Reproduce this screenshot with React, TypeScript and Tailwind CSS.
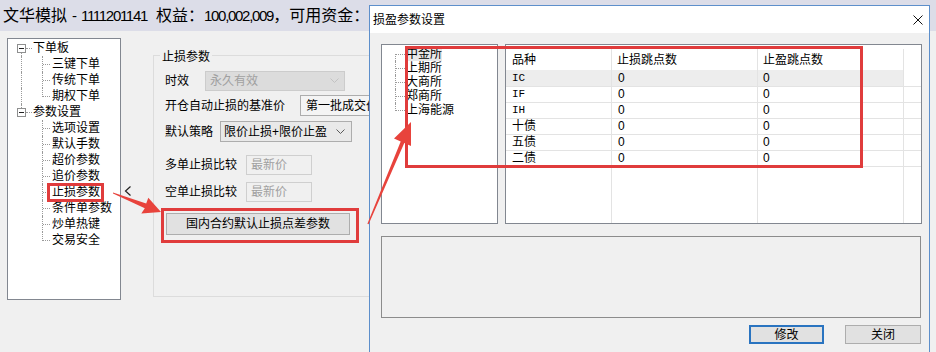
import React from "react";

const tree = [
  { label: "下单板", children: ["三键下单", "传统下单", "期权下单"] },
  {
    label: "参数设置",
    children: ["选项设置", "默认手数", "超价参数", "追价参数", "止损参数", "条件单参数", "炒单热键", "交易安全"],
  },
];

const exchanges = ["中金所", "上期所", "大商所", "郑商所", "上海能源"];

const rows = [
  { name: "IC", mono: true },
  { name: "IF", mono: true },
  { name: "IH", mono: true },
  { name: "十债", mono: false },
  { name: "五债", mono: false },
  { name: "二债", mono: false },
];

function Chevron({ disabled }: { disabled?: boolean }) {
  return (
    <svg width="9" height="5" viewBox="0 0 9 5" className="shrink-0">
      <polyline
        points="0.5,0.5 4.5,4.5 8.5,0.5"
        fill="none"
        stroke={disabled ? "#c2c2c2" : "#5a5a5a"}
        strokeWidth="1"
      />
    </svg>
  );
}

function Expander() {
  return (
    <span className="absolute left-[9px] top-[4px] flex h-[9px] w-[9px] items-center justify-center border border-[#8e8f8f] bg-white">
      <span className="h-px w-[5px] bg-[#222]" />
    </span>
  );
}

function Tree() {
  return (
    <div className="ml-[7px] mt-[7px] h-[262px] w-[114px] shrink-0 border border-[#828790] bg-white pt-[1px] text-[12px] leading-4 text-black">
      {tree.map((g, gi) => (
        <div key={g.label}>
          <div className="relative flex h-4 items-center">
            {gi > 0 && <span className="absolute left-[13px] top-0 h-[4px] border-l border-dotted border-[#9a9a9a]" />}
            {gi < tree.length - 1 && (
              <span className="absolute bottom-0 left-[13px] top-[13px] border-l border-dotted border-[#9a9a9a]" />
            )}
            <Expander />
            <span className="absolute left-[18px] top-[8px] w-[6px] border-t border-dotted border-[#9a9a9a]" />
            <span className="pl-[25px]">{g.label}</span>
          </div>
          {g.children.map((c, ci) => (
            <div key={c} className="relative flex h-4 items-center">
              {gi < tree.length - 1 && (
                <span className="absolute bottom-0 left-[13px] top-0 border-l border-dotted border-[#9a9a9a]" />
              )}
              <span
                className={`absolute left-[34px] top-0 border-l border-dotted border-[#9a9a9a] ${
                  ci === g.children.length - 1 ? "h-[9px]" : "bottom-0"
                }`}
              />
              <span className="absolute left-[35px] top-[8px] w-[7px] border-t border-dotted border-[#9a9a9a]" />
              <span className="pl-[44px]">{c}</span>
            </div>
          ))}
        </div>
      ))}
    </div>
  );
}

function StopLossGroup() {
  return (
    <div className="relative mt-[24px] h-[242px] w-[400px] shrink-0 border border-[#dcdcdc] text-[12px] leading-4 text-black">
      <span className="absolute -top-[7px] left-[6px] bg-[#f0f0f0] px-[2px]">止损参数</span>

      <div className="mt-[14px] flex h-[21px] items-center pl-[11px]">
        <span className="w-[40px]">时效</span>
        <div className="flex h-[20px] w-[140px] items-center justify-between border border-[#cccccc] bg-[#dcdcdc] pl-[4px] pr-[5px] text-[#a0a0a0]">
          <span>永久有效</span>
          <Chevron disabled />
        </div>
      </div>

      <div className="mt-[4px] flex h-[21px] items-center pl-[11px]">
        <span className="w-[135px]">开仓自动止损的基准价</span>
        <div className="flex h-[21px] w-[160px] items-center border border-[#adadad] bg-[#f4f4f4] pl-[5px]">
          <span>第一批成交价</span>
        </div>
      </div>

      <div className="mt-[5px] flex h-[21px] items-center pl-[11px]">
        <span className="w-[55px]">默认策略</span>
        <div className="flex h-[21px] w-[132px] items-center justify-between border border-[#adadad] bg-[#e9e9e9] pl-[3px] pr-[6px]">
          <span>限价止损+限价止盈</span>
          <Chevron />
        </div>
      </div>

      <div className="mt-[13px] flex h-[20px] items-center pl-[11px]">
        <span className="w-[81px]">多单止损比较</span>
        <div className="flex h-[20px] w-[66px] items-center border border-[#cfcfcf] bg-[#f0f0f0] pl-[4px] text-[#a0a0a0]">
          最新价
        </div>
      </div>

      <div className="mt-[7px] flex h-[20px] items-center pl-[11px]">
        <span className="w-[81px]">空单止损比较</span>
        <div className="flex h-[20px] w-[66px] items-center border border-[#cfcfcf] bg-[#f0f0f0] pl-[4px] text-[#a0a0a0]">
          最新价
        </div>
      </div>

      <div className="mt-[11px] pl-[12px]">
        <button
          type="button"
          className="flex h-[22px] w-[184px] items-center justify-center border border-[#adadad] bg-[#e1e1e1] text-[12px] text-black"
        >
          国内合约默认止损点差参数
        </button>
      </div>
    </div>
  );
}

function ExchangeList() {
  return (
    <div className="ml-[11px] h-[180px] w-[117px] shrink-0 border border-[#828790] bg-white pt-[2px] text-[12px] leading-[14px] text-black">
      {exchanges.map((e, i) => (
        <div key={e} className="relative flex h-[14px] items-center">
          <span
            className={`absolute left-[13px] border-l border-dotted border-[#9a9a9a] ${
              i === 0 ? "top-[7px] bottom-0" : i === exchanges.length - 1 ? "top-0 h-[8px]" : "top-0 bottom-0"
            }`}
          />
          <span className="absolute left-[14px] top-[7px] w-[9px] border-t border-dotted border-[#9a9a9a]" />
          <span className={`ml-[23px] pl-px ${i === 0 ? "bg-[#e8e8e8]" : ""}`}>{e}</span>
        </div>
      ))}
    </div>
  );
}

function PointsTable() {
  return (
    <div className="ml-[7px] flex h-[180px] w-[417px] shrink-0 flex-col border border-[#828790] bg-white text-[12px] leading-4 text-black">
      <div className="grid h-[25px] grid-cols-[106px_146px_146px_1fr] pt-[4px]">
        <div className="flex items-center border-r border-[#e3e3e3] pl-[6px]">品种</div>
        <div className="flex items-center border-r border-[#e3e3e3] pl-[5px]">止损跳点数</div>
        <div className="flex items-center border-r border-[#e3e3e3] pl-[5px]">止盈跳点数</div>
        <div />
      </div>
      {rows.map((r, i) => (
        <div key={r.name} className="grid h-[16px] grid-cols-[106px_146px_146px_1fr]">
          <div
            className={`flex items-center border-b border-r border-[#e3e3e3] pl-[6px] ${i === 0 ? "bg-[#ededed]" : ""} ${
              r.mono ? "font-['Liberation_Mono',monospace] text-[11px]" : ""
            }`}
          >
            {r.name}
          </div>
          <div
            className={`flex items-center border-b border-r border-[#e3e3e3] pl-[6px] text-[12px] ${
              i === 0 ? "bg-[#ededed]" : ""
            }`}
          >
            0
          </div>
          <div
            className={`flex items-center border-b border-r border-[#e3e3e3] pl-[5px] text-[12px] ${
              i === 0 ? "bg-[#ededed]" : ""
            }`}
          >
            0
          </div>
          <div className="border-b border-[#e3e3e3]" />
        </div>
      ))}
      <div className="grid flex-1 grid-cols-[106px_146px_146px_1fr]">
        <div className="border-r border-[#e3e3e3]" />
        <div className="border-r border-[#e3e3e3]" />
        <div className="border-r border-[#e3e3e3]" />
        <div />
      </div>
    </div>
  );
}

function Dialog() {
  return (
    <div className="absolute left-[369px] top-[5px] z-10 flex h-[360px] w-[561px] flex-col border border-[#5d8fcb] bg-[#f0f0f0]">
      <div className="flex h-[27px] shrink-0 items-center justify-between bg-white pl-[3px] pr-[6px] text-[12px] text-black">
        <span>损盈参数设置</span>
        <svg width="10" height="10" viewBox="0 0 10 10">
          <path d="M0.5 0.5 L9.5 9.5 M9.5 0.5 L0.5 9.5" stroke="#111" strokeWidth="1" fill="none" />
        </svg>
      </div>
      <div className="mt-[11px] flex">
        <ExchangeList />
        <PointsTable />
      </div>
      <div className="ml-[11px] mt-[12px] h-[82px] w-[540px] border border-[#8c8c8c] bg-[#f0f0f0]" />
      <div className="mt-[7px] flex text-[12px] text-black">
        <button
          type="button"
          className="ml-[379px] flex h-[19px] w-[75px] items-center justify-center border-2 border-[#2a74c0] bg-[#e1e1e1]"
        >
          修改
        </button>
        <button
          type="button"
          className="ml-[21px] flex h-[19px] w-[76px] items-center justify-center border border-[#adadad] bg-[#e1e1e1]"
        >
          关闭
        </button>
      </div>
    </div>
  );
}

function Annotations() {
  return (
    <svg className="pointer-events-none absolute inset-0 z-20" width="936" height="352" viewBox="0 0 936 352">
      <g fill="none" stroke="#e03c3c" strokeWidth="3">
        <rect x="48.5" y="184.5" width="54" height="16" />
        <rect x="162.5" y="209.5" width="195" height="32" />
        <rect x="406.5" y="47.5" width="455" height="119" />
      </g>
      <g fill="#e8433c">
        <polygon points="113,192.5 113,193.5 144.8,208.2 141.3,213.5 161,212 148.3,197.8 146.2,203.6" />
        <polygon points="367.4,223.8 368.6,224.3 404.3,143.1 411,146 411,122 394,138.5 400.7,141.5" />
      </g>
    </svg>
  );
}

export default function App() {
  return (
    <div className="relative h-[352px] w-[936px] overflow-hidden bg-[#f0f0f0] font-['Liberation_Sans','Noto_Sans_CJK_SC',sans-serif] text-black">
      <div className="flex h-[31px] items-center bg-[#dcdde8] pl-[3px] text-[16px] leading-5">
        <span>文华模拟</span>
        <span className="ml-[5px] text-[15px]">-</span>
        <span className="ml-[4px] text-[15px] tracking-[-1.3px]">1111201141</span>
        <span className="ml-[9px]">权益：</span>
        <span className="text-[15px] tracking-[-1.3px]">100,002,009</span>
        <span>，可用资金：</span>
      </div>
      <div className="flex h-[321px]">
        <Tree />
        <div className="w-[32px] shrink-0 pl-[3px] pt-[155px]">
          <svg width="8" height="10" viewBox="0 0 8 10">
            <polyline points="6.5,0.5 1.5,5 6.5,9.5" fill="none" stroke="#222" strokeWidth="1.2" />
          </svg>
        </div>
        <StopLossGroup />
      </div>
      <Dialog />
      <Annotations />
    </div>
  );
}
